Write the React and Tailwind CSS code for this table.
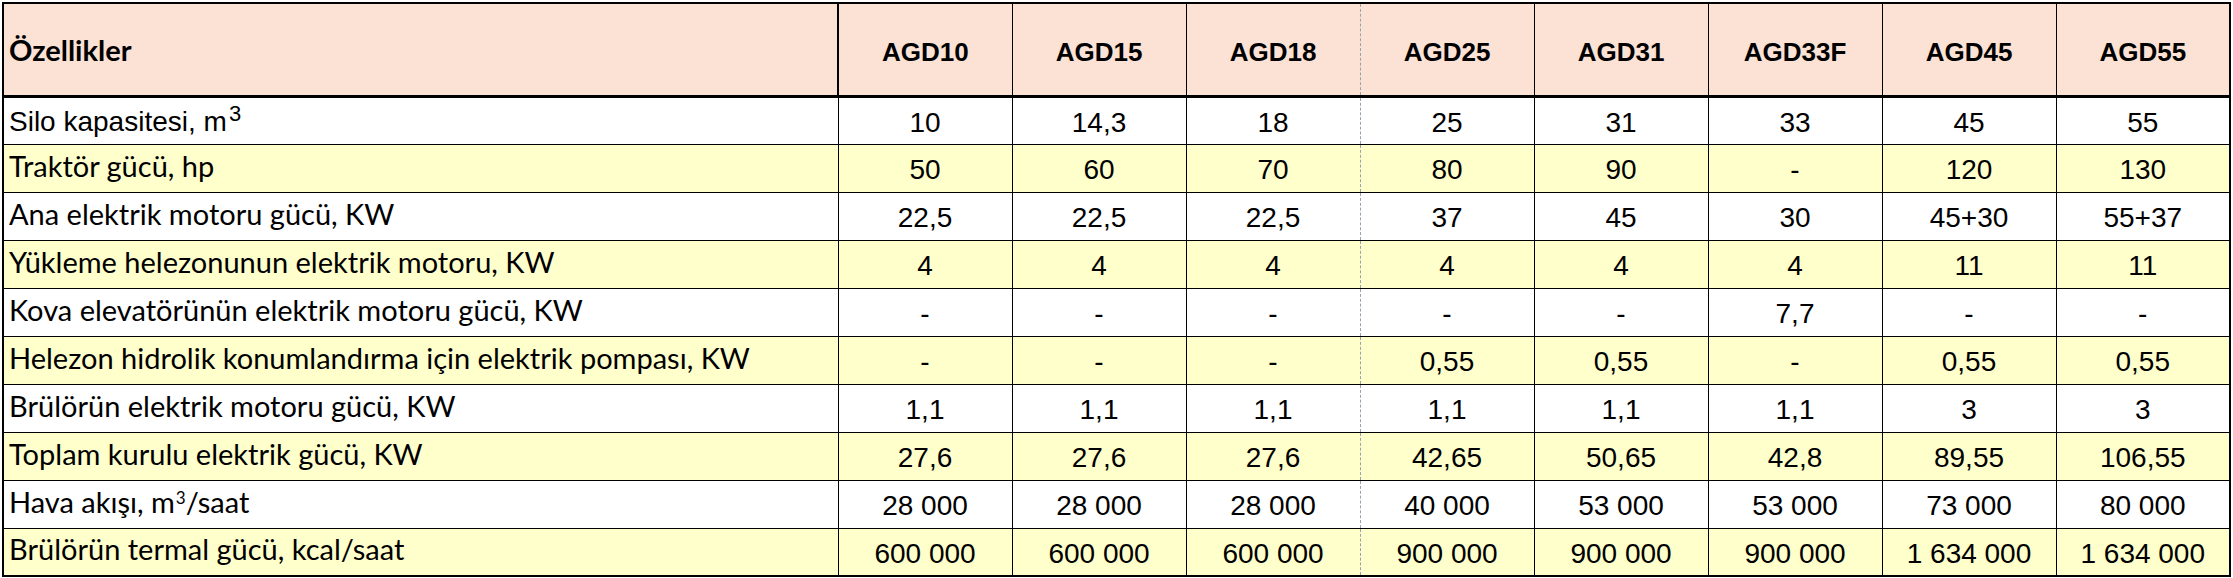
import React from "react";

const models = ["AGD10", "AGD15", "AGD18", "AGD25", "AGD31", "AGD33F", "AGD45", "AGD55"];

const rows = [
  { label: "Silo kapasitesi, m", sup: "3", arial: true, values: ["10", "14,3", "18", "25", "31", "33", "45", "55"] },
  { label: "Traktör gücü, hp", values: ["50", "60", "70", "80", "90", "-", "120", "130"] },
  { label: "Ana elektrik motoru gücü, KW", values: ["22,5", "22,5", "22,5", "37", "45", "30", "45+30", "55+37"] },
  { label: "Yükleme helezonunun elektrik motoru, KW", values: ["4", "4", "4", "4", "4", "4", "11", "11"] },
  { label: "Kova elevatörünün elektrik motoru gücü, KW", values: ["-", "-", "-", "-", "-", "7,7", "-", "-"] },
  { label: "Helezon hidrolik konumlandırma için elektrik pompası, KW", values: ["-", "-", "-", "0,55", "0,55", "-", "0,55", "0,55"] },
  { label: "Brülörün elektrik motoru gücü, KW", values: ["1,1", "1,1", "1,1", "1,1", "1,1", "1,1", "3", "3"] },
  { label: "Toplam kurulu elektrik gücü, KW", values: ["27,6", "27,6", "27,6", "42,65", "50,65", "42,8", "89,55", "106,55"] },
  { label: "Hava akışı, m", sup: "3", after: "/saat", values: ["28 000", "28 000", "28 000", "40 000", "53 000", "53 000", "73 000", "80 000"] },
  { label: "Brülörün termal gücü, kcal/saat", values: ["600 000", "600 000", "600 000", "900 000", "900 000", "900 000", "1 634 000", "1 634 000"] },
];

// the AGD18 | AGD25 divider is a thin dashed grey line in the sheet
const sideBorders = (i) => {
  if (i === 2) return "border-l border-l-black border-r border-r-gray-400 [border-right-style:dashed]";
  if (i === 3) return "border-r border-r-black";
  if (i === 7) return "border-l border-l-black border-r-2 border-r-black";
  return "border-x border-black";
};

const App = () => {
  return (
    <div className="bg-white w-[2233px] h-[578px] p-[2px]">
      <table className="table-fixed border-collapse w-[2227px] text-black">
        <colgroup>
          <col className="w-[835px]" />
          {models.map((m) => (
            <col key={m} className="w-[174px]" />
          ))}
        </colgroup>
        <thead>
          <tr className="h-[93px] bg-[#fbe2d5]">
            <th className="border-2 border-black border-b-[3px] text-left align-middle pl-[5px] font-['Lato',sans-serif] font-bold text-[29px]">
              Özellikler
            </th>
            {models.map((m, i) => (
              <th
                key={m}
                className={`border-t-2 border-b-[3px] border-t-black border-b-black ${sideBorders(i)} text-center align-middle pt-[6px] font-['Liberation_Sans',Arial,sans-serif] font-bold text-[26px]`}>
                {m}
              </th>
            ))}
          </tr>
        </thead>
        <tbody>
          {rows.map((row, r) => (
            <tr key={row.label} className={`h-[48px] ${r % 2 === 1 ? "bg-[#ffffcc]" : "bg-white"}`}>
              <td
                className={`border border-black border-l-2 ${r === rows.length - 1 ? "border-b-2" : ""} pl-[5px] align-middle whitespace-nowrap leading-none ${row.arial ? "font-['Liberation_Sans',Arial,sans-serif] text-[28px] pt-[2px]" : "font-['Lato',sans-serif] text-[29px] pb-[6px]"}`}>
                {row.label}
                {row.sup &&
                  (row.arial ? (
                    <sup className="text-[22px] top-[-10px] ml-[2px]">{row.sup}</sup>
                  ) : (
                    <sup className="text-[17px] top-[-9px] ml-[1px]">{row.sup}</sup>
                  ))}
                {row.after}
              </td>
              {row.values.map((v, i) => (
                <td
                  key={i}
                  className={`border-y border-y-black ${sideBorders(i)} ${r === rows.length - 1 ? "border-b-2" : ""} text-center align-middle pt-[4px] font-['Liberation_Sans',Arial,sans-serif] text-[28px] leading-none`}>
                  {v}
                </td>
              ))}
            </tr>
          ))}
        </tbody>
      </table>
    </div>
  );
};

export default App;
